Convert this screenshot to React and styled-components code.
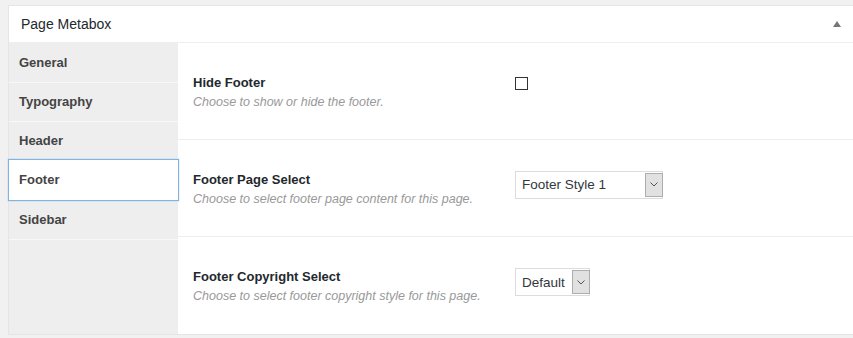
import React from "react";
import styled, { createGlobalStyle } from "styled-components";

const Global = createGlobalStyle`
  html, body { margin: 0; padding: 0; background: #f1f1f1; }
  body { font-family: "Liberation Sans", Arial, sans-serif; overflow: hidden; }
  * { box-sizing: border-box; }
`;

const Page = styled.div`
  padding: 5px 0 0 8px;
  width: 853px;
  height: 338px;
`;

const Box = styled.div`
  background: #fff;
  border: 1px solid #e5e5e5;
  border-right: none;
  display: flex;
  flex-direction: column;
`;

const Header = styled.div`
  height: 37px;
  border-bottom: 1px solid #eee;
  display: flex;
  align-items: center;
  justify-content: space-between;
  padding: 0 12px 0 12px;
  font-size: 14px;
  color: #23282d;
`;

const Toggle = styled.span`
  width: 0;
  height: 0;
  border-left: 4px solid transparent;
  border-right: 4px solid transparent;
  border-bottom: 6px solid #72777c;
  margin-top: -1px;
`;

const Body = styled.div`
  display: flex;
  height: 291px;
`;

const Tabs = styled.ul`
  list-style: none;
  margin: 0;
  padding: 1px 0 0 0;
  width: 169px;
  background: #eee;
  flex-shrink: 0;
`;

const Tab = styled.li`
  font-size: 13px;
  font-weight: bold;
  color: #444;
  line-height: 16px;
  padding: ${(p) => (p.$active ? "12px 10px 12px 10px" : "11px 10px")};
  border-bottom: 1px solid #f8f8f8;
  ${(p) =>
    p.$active &&
    `
    background: #fff;
    border: 1px solid #7fb3e3;
    box-shadow: 0 0 1px rgba(30,140,190,.5);
    margin: -2px -1px 0 -1px;
    padding-left: 10px;
    position: relative;
    z-index: 1;
  `}
`;

const Content = styled.div`
  flex: 1;
  background: #fff;
`;

const Row = styled.div`
  height: 97px;
  border-bottom: ${(p) => (p.$last ? "none" : "1px solid #eee")};
  display: flex;
  align-items: center;
  padding: 2px 0 0 15px;
`;

const Inner = styled.div`
  display: flex;
  align-items: flex-start;
`;

const Label = styled.div`
  width: 322px;
  flex-shrink: 0;
`;

const Title = styled.div`
  font-size: 13px;
  font-weight: bold;
  color: #23282d;
  line-height: 18px;
`;

const Desc = styled.div`
  font-size: 12.5px;
  font-style: italic;
  color: #999;
  line-height: 18px;
  margin-top: 1px;
`;

const Checkbox = styled.span`
  display: block;
  width: 13px;
  height: 13px;
  border: 1px solid #333;
  background: #fff;
  margin-top: 3px;
`;

const Select = styled.div`
  display: inline-flex;
  align-items: stretch;
  width: ${(p) => p.$w}px;
  height: 28px;
  border: 1px solid #dcdcdc;
  background: #fff;
  padding: 1px 0;
`;

const SelectValue = styled.span`
  flex: 1;
  display: flex;
  align-items: center;
  padding-left: 6px;
  font-size: 13.5px;
  color: #32373c;
`;

const Arrow = styled.span`
  width: 18px;
  margin-right: -1px;
  background: #e1e1e1;
  border: 1px solid #adadad;
  display: flex;
  align-items: center;
  justify-content: center;
`;

const Chevron = () => (
  <svg width="8" height="5" viewBox="0 0 8 5">
    <path d="M0.5 0.5 L4 4 L7.5 0.5" fill="none" stroke="#555" strokeWidth="1" />
  </svg>
);

const Dropdown = ({ value, w }) => (
  <Select $w={w}>
    <SelectValue>{value}</SelectValue>
    <Arrow>
      <Chevron />
    </Arrow>
  </Select>
);

const tabs = ["General", "Typography", "Header", "Footer", "Sidebar"];

export default function App() {
  return (
    <>
      <Global />
      <Page>
        <Box>
          <Header>
            <span>Page Metabox</span>
            <Toggle />
          </Header>
          <Body>
            <Tabs>
              {tabs.map((t) => (
                <Tab key={t} $active={t === "Footer"}>
                  {t}
                </Tab>
              ))}
            </Tabs>
            <Content>
              <Row>
                <Inner>
                  <Label>
                    <Title>Hide Footer</Title>
                    <Desc>Choose to show or hide the footer.</Desc>
                  </Label>
                  <Checkbox />
                </Inner>
              </Row>
              <Row>
                <Inner>
                  <Label>
                    <Title>Footer Page Select</Title>
                    <Desc>Choose to select footer page content for this page.</Desc>
                  </Label>
                  <Dropdown value="Footer Style 1" w={148} />
                </Inner>
              </Row>
              <Row $last>
                <Inner>
                  <Label>
                    <Title>Footer Copyright Select</Title>
                    <Desc>Choose to select footer copyright style for this page.</Desc>
                  </Label>
                  <Dropdown value="Default" w={75} />
                </Inner>
              </Row>
            </Content>
          </Body>
        </Box>
      </Page>
    </>
  );
}
